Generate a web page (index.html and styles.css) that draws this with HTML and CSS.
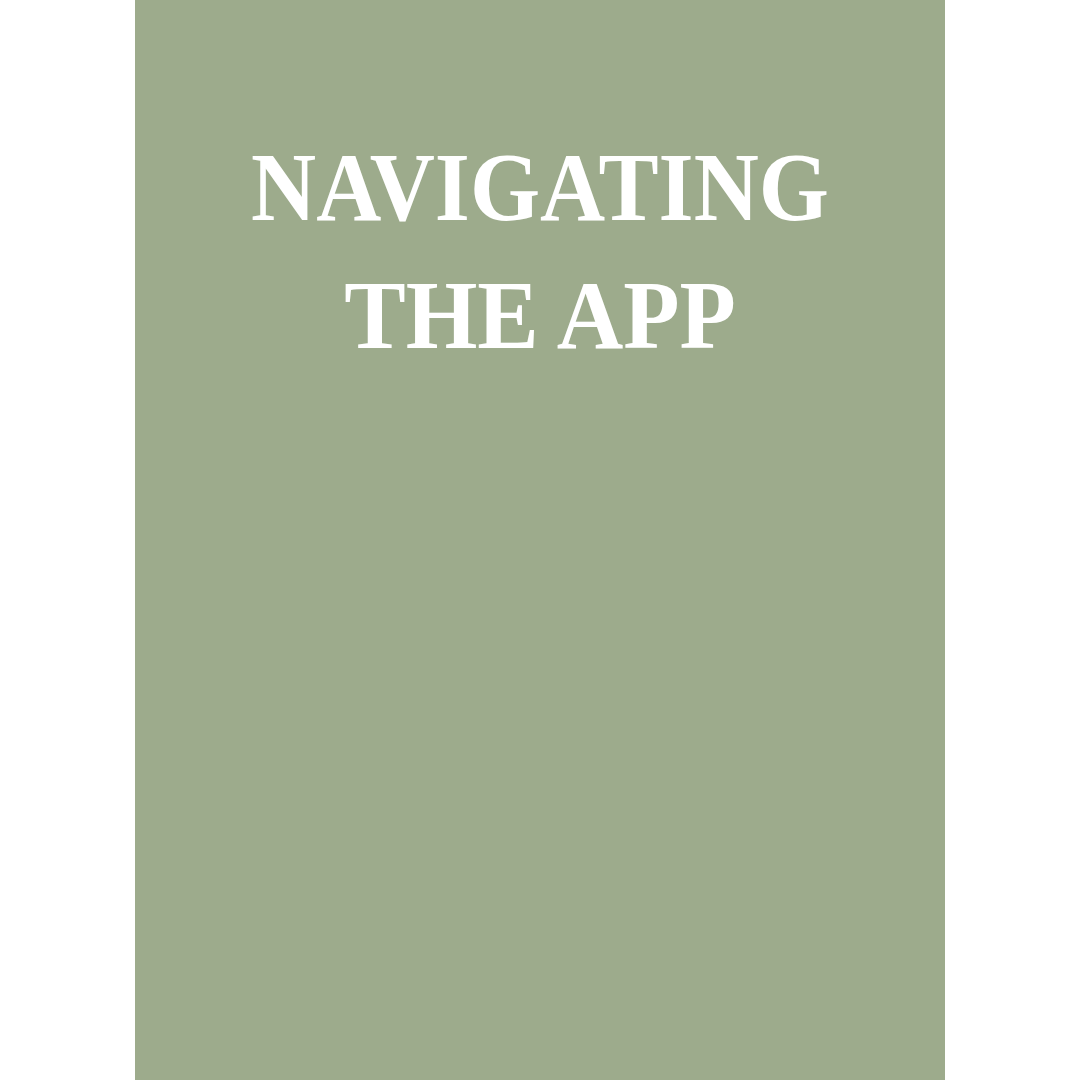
FILE: index.html
```html
<!DOCTYPE html>
<html lang="en">
<head>
<meta charset="utf-8">
<title>Navigating the App</title>
<link rel="stylesheet" href="styles.css">
</head>
<body>
<main class="panel">
  <h1 class="title"><span class="line">NAVIGATING</span><span class="line line-second">THE APP</span></h1>
</main>
</body>
</html>
```
FILE: styles.css
```css
html, body {
  margin: 0;
  padding: 0;
  background: #ffffff;
}
body {
  display: flex;
  justify-content: center;
  height: 1080px;
  overflow: hidden;
}
.panel {
  width: 810px;
  height: 1080px;
  background: #9dab8c;
  box-sizing: border-box;
  padding-top: 123px;
}
.title {
  margin: 0;
  font-family: "Liberation Serif", "Times New Roman", serif;
  font-weight: bold;
  font-size: 98px;
  line-height: 128px;
  color: #ffffff;
  text-align: center;
  letter-spacing: 0;
}
.line {
  display: block;
  transform: scaleX(0.92);
}
.line-second {
  transform: scaleX(0.94);
}
```
